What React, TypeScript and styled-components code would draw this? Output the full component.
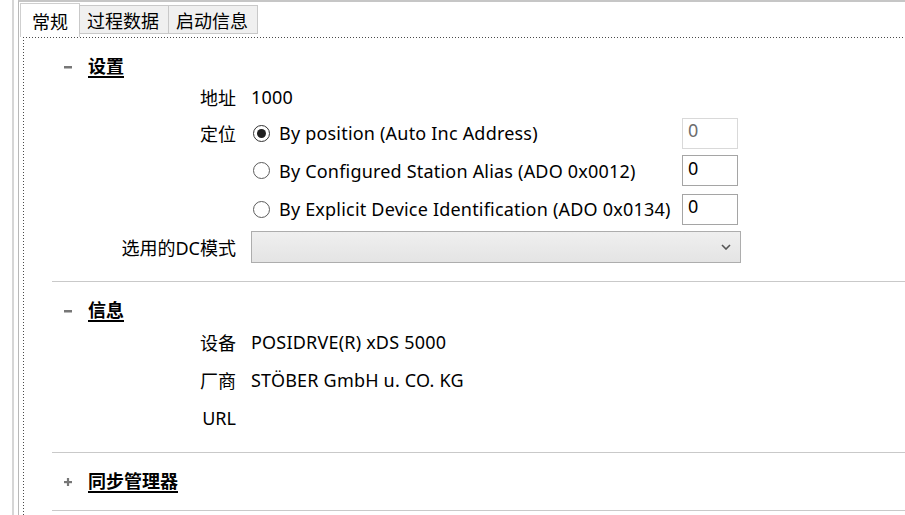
import { FC } from 'react'
import styled, { createGlobalStyle, css } from 'styled-components'

const GlobalStyle = createGlobalStyle`
  html, body {
    margin: 0;
    padding: 0;
    background: #ffffff;
  }
  body {
    font-family: 'Noto Sans', 'Noto Sans CJK SC', sans-serif;
    font-size: 18px;
    letter-spacing: 0.2px;
    color: #000;
  }
`

const Root = styled.div`
  display: flex;
  flex-direction: row;
  height: 515px;
  overflow: hidden;
  background: #fff;
`

const Gutter = styled.div`
  width: 12px;
  flex-shrink: 0;
`

const Rail = styled.div`
  width: 2px;
  flex-shrink: 0;
  background: #d6d6d6;
  margin-right: 4px;
`

const Frame = styled.div`
  flex: 1;
  display: flex;
  flex-direction: column;
  border-left: 1px solid #b9b9b9;
  border-top: 2px solid #c6c6c6;
  padding-left: 1px;
  min-width: 0;
`

const TabBar = styled.div`
  display: flex;
  flex-direction: row;
  align-items: flex-start;
  height: 35px;
  flex-shrink: 0;
`

const Tab = styled.div<{ active?: boolean }>`
  ${({ active }) => css`
    box-sizing: border-box;
    display: flex;
    align-items: center;
    justify-content: center;
    font-family: 'Noto Sans CJK SC', sans-serif;
    font-size: 18px;
    letter-spacing: 0;
    border: 1px solid #cfcfcf;
    padding: 0 11px;
    ${active
      ? css`
          margin-top: 1px;
          height: 34px;
          border-bottom: none;
          background: #ffffff;
        `
      : css`
          margin-top: 3px;
          height: 29px;
          margin-left: -1px;
          padding: 0 9px 0 7px;
          background: #f0f0f0;
          border-color: #c9c9c9;
        `}
  `}
`

const Panel = styled.div`
  flex: 1;
  margin-left: 3px;
  padding-left: 1px;
  padding-top: 1px;
  background-image: repeating-linear-gradient(
      to right,
      #4a4a4a 0 1px,
      transparent 1px 3px
    ),
    repeating-linear-gradient(to bottom, #4a4a4a 0 1px, transparent 1px 3px);
  background-size: 100% 1px, 1px 100%;
  background-position: top left, top left;
  background-repeat: no-repeat;
`

const SectionHeader = styled.div`
  box-sizing: border-box;
  display: flex;
  flex-direction: row;
  align-items: center;
  height: 28px;
  margin-top: 15px;
  padding-left: 40px;
  padding-bottom: 4px;
`

const Toggle = styled.div`
  width: 8px;
  height: 8px;
  margin-right: 16px;
  margin-top: 3px;
  display: flex;
  align-items: center;
  justify-content: center;
`

const SectionTitle = styled.span`
  font-family: 'Noto Sans CJK SC', sans-serif;
  font-size: 18px;
  font-weight: 700;
  letter-spacing: 0;
  text-decoration: underline;
  text-decoration-thickness: 2px;
  text-underline-offset: 3px;
`

const Fields = styled.div<{ rows: string }>`
  ${({ rows }) => css`
    display: grid;
    grid-template-columns: 212px auto;
    grid-template-rows: ${rows};
    column-gap: 15px;
    align-items: center;
    margin-top: -2px;
  `}
`

const Label = styled.div`
  text-align: right;
  white-space: nowrap;
  letter-spacing: 0;
`

const Value = styled.div`
  white-space: nowrap;
`

const OptionRow = styled.div`
  display: grid;
  grid-template-columns: 431px 56px;
  align-items: center;
`

const RadioLabel = styled.label`
  display: flex;
  flex-direction: row;
  align-items: center;
  white-space: nowrap;
`

const RadioDot = styled.span<{ checked?: boolean }>`
  ${({ checked }) => css`
    box-sizing: border-box;
    width: 17px;
    height: 17px;
    margin-left: 2px;
    margin-right: 9px;
    border-radius: 50%;
    border: 1px solid ${checked ? '#333333' : '#5c5c5c'};
    background: #fff;
    display: flex;
    align-items: center;
    justify-content: center;
    flex-shrink: 0;
    &::after {
      content: '';
      display: ${checked ? 'block' : 'none'};
      width: 9px;
      height: 9px;
      border-radius: 50%;
      background: #1f1f1f;
    }
  `}
`

const NumBox = styled.input`
  box-sizing: border-box;
  width: 56px;
  height: 31px;
  margin: 0;
  padding: 0 0 6px 5px;
  border: 1px solid #a5a5a5;
  font-family: 'Noto Sans', sans-serif;
  font-size: 18px;
  color: #000;
  background: #fff;
  outline: none;
  &:disabled {
    border-color: #d9d9d9;
    color: #6d6d6d;
  }
`

const Dropdown = styled.div`
  box-sizing: border-box;
  width: 490px;
  height: 32px;
  border: 1px solid #adadad;
  background: linear-gradient(to bottom, #efefef, #e4e4e4);
  display: flex;
  align-items: center;
  justify-content: flex-end;
  padding-right: 9px;
`

const Separator = styled.div<{ gap?: number }>`
  height: 1px;
  background: #c9c9c9;
  margin-left: 28px;
  margin-top: ${({ gap }) => gap ?? 15}px;
`

const Minus = () => (
  <svg width="8" height="8" viewBox="0 0 8 8">
    <rect x="0" y="3" width="8" height="2.5" fill="#777" />
  </svg>
)

const Plus = () => (
  <svg width="8" height="8" viewBox="0 0 8 8">
    <rect x="0" y="3" width="8" height="2.2" fill="#777" />
    <rect x="2.9" y="0" width="2.2" height="8" fill="#777" />
  </svg>
)

const Chevron = () => (
  <svg width="10" height="6" viewBox="0 0 10 6">
    <path d="M1 1 L5 5 L9 1" fill="none" stroke="#555" strokeWidth="1.6" />
  </svg>
)

const Radio: FC<{ checked?: boolean; text: string }> = ({ checked, text }) => (
  <RadioLabel>
    <RadioDot checked={checked} />
    {text}
  </RadioLabel>
)

const App: FC = () => {
  return (
    <>
      <GlobalStyle />
      <Root>
        <Gutter />
        <Rail />
        <Frame>
          <TabBar>
            <Tab active>常规</Tab>
            <Tab>过程数据</Tab>
            <Tab>启动信息</Tab>
          </TabBar>
          <Panel>
            <SectionHeader>
              <Toggle>
                <Minus />
              </Toggle>
              <SectionTitle>设置</SectionTitle>
            </SectionHeader>
            <Fields rows="36px 36px 39px 38px 38px">
              <Label>地址</Label>
              <Value>1000</Value>
              <Label>定位</Label>
              <OptionRow>
                <Radio checked text="By position (Auto Inc Address)" />
                <NumBox disabled defaultValue="0" />
              </OptionRow>
              <Label />
              <OptionRow>
                <Radio text="By Configured Station Alias (ADO 0x0012)" />
                <NumBox defaultValue="0" />
              </OptionRow>
              <Label />
              <OptionRow>
                <Radio text="By Explicit Device Identification (ADO 0x0134)" />
                <NumBox defaultValue="0" />
              </OptionRow>
              <Label>选用的DC模式</Label>
              <Dropdown>
                <Chevron />
              </Dropdown>
            </Fields>
            <Separator gap={15} />

            <SectionHeader>
              <Toggle>
                <Minus />
              </Toggle>
              <SectionTitle>信息</SectionTitle>
            </SectionHeader>
            <Fields rows="38px 38px 38px">
              <Label>设备</Label>
              <Value>POSIDRVE(R) xDS 5000</Value>
              <Label>厂商</Label>
              <Value>STÖBER GmbH u. CO. KG</Value>
              <Label>URL</Label>
              <Value />
            </Fields>
            <Separator />

            <SectionHeader>
              <Toggle>
                <Plus />
              </Toggle>
              <SectionTitle>同步管理器</SectionTitle>
            </SectionHeader>
            <Separator gap={14} />
          </Panel>
        </Frame>
      </Root>
    </>
  )
}

export default App
